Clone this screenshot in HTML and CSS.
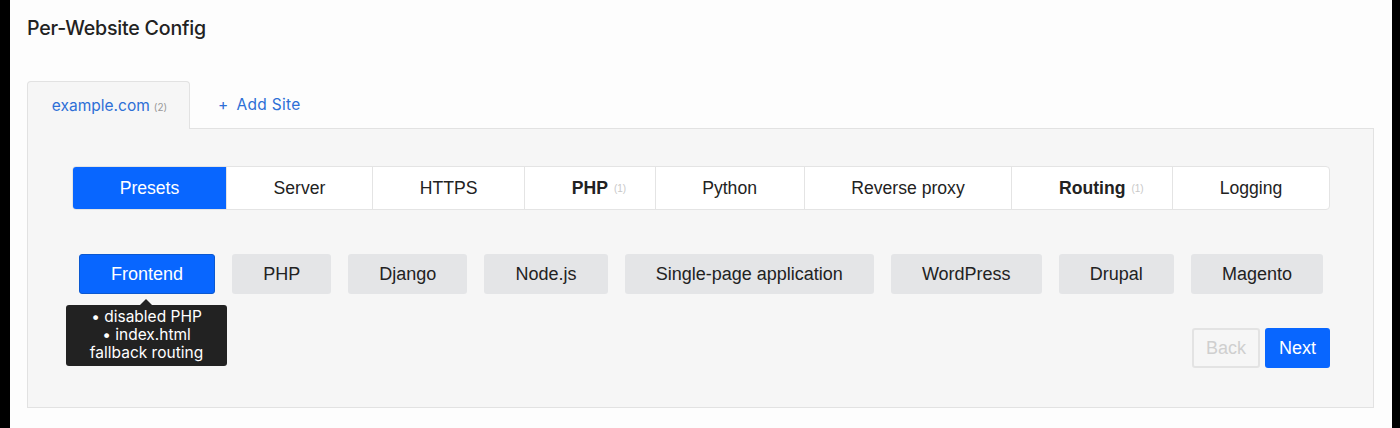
FILE: index.html
```html
<!DOCTYPE html>
<html>
<head>
<meta charset="utf-8">
<link rel="stylesheet" href="styles.css">
</head>
<body>
<div class="page">
  <h1 class="title">Per-Website Config</h1>
  <div class="site-tabs">
    <div class="site-tab active">example.com <span class="count">(2)</span></div>
    <div class="site-tab add"><span class="plus">+</span>Add Site</div>
    <div class="site-tabs-fill"></div>
  </div>
  <div class="panel">
    <div class="steps">
      <div class="step active">Presets</div>
      <div class="step">Server</div>
      <div class="step">HTTPS</div>
      <div class="step"><b class="has-badge">PHP<span class="badge">(1)</span></b></div>
      <div class="step">Python</div>
      <div class="step">Reverse proxy</div>
      <div class="step"><b class="has-badge">Routing<span class="badge">(1)</span></b></div>
      <div class="step">Logging</div>
    </div>
    <div class="presets">
      <div class="preset-wrap">
        <div class="preset active">Frontend</div>
        <div class="tooltip">• disabled PHP<br>• index.html<br>fallback routing</div>
      </div>
      <div class="preset">PHP</div>
      <div class="preset">Django</div>
      <div class="preset">Node.js</div>
      <div class="preset">Single-page application</div>
      <div class="preset">WordPress</div>
      <div class="preset">Drupal</div>
      <div class="preset">Magento</div>
    </div>
    <div class="nav">
      <div class="btn back">Back</div>
      <div class="btn next">Next</div>
    </div>
  </div>
</div>
</body>
</html>
```

FILE: styles.css
```css
html, body {
  margin: 0;
  padding: 0;
  background: #000;
  height: 428px;
  overflow: hidden;
}
.page {
  margin: 0 8px 0 10px;
  height: 428px;
  background: #fdfdfd;
  padding: 16px 18px 0 17px;
  box-sizing: border-box;
  font-family: "Liberation Sans", Arial, sans-serif;
  color: #222;
}
.title {
  margin: 0;
  font-family: Inter, "Noto Sans", sans-serif;
  font-size: 19.6px;
  line-height: 24px;
  font-weight: 500;
  color: #222;
  letter-spacing: -0.2px;
}
.site-tabs {
  display: flex;
  margin-top: 41px;
  height: 48px;
}
.site-tab {
  font-family: Inter, "Noto Sans", sans-serif;
  font-size: 15.5px;
  color: #2d6fd6;
  display: flex;
  align-items: center;
  box-sizing: border-box;
  padding-bottom: 1px;
}
.site-tab.active {
  width: 163px;
  justify-content: center;
  background: #f6f6f6;
  border: 1px solid #e2e2e2;
  border-bottom: none;
  border-radius: 4px 4px 0 0;
  padding-left: 2px;
}
.site-tab.add {
  padding-left: 28px;
  padding-right: 20px;
  border-bottom: 1px solid #e2e2e2;
  letter-spacing: 0.3px;
}
.plus {
  margin-right: 8px;
}
.site-tabs-fill {
  flex: 1;
  border-bottom: 1px solid #e2e2e2;
}
.count {
  font-size: 10px;
  color: #999;
  margin-left: 4px;
  margin-top: 3px;
}
.panel {
  background: #f6f6f6;
  border: 1px solid #e2e2e2;
  border-top: none;
  height: 279px;
  box-sizing: border-box;
  padding: 37px 43px 0 44px;
}
.steps {
  display: flex;
  height: 44px;
  background: #fff;
  border: 1px solid #e4e4e4;
  border-radius: 4px;
  box-sizing: border-box;
  overflow: hidden;
}
.step {
  flex: 1 1 auto;
  display: flex;
  align-items: center;
  justify-content: center;
  font-size: 17.6px;
  color: #222;
  border-left: 1px solid #e4e4e4;
  padding: 0 44px;
  white-space: nowrap;
}
.step:first-child { border-left: none; }
.has-badge {
  position: relative;
  font-weight: 700;
}
.badge {
  position: absolute;
  left: 100%;
  top: 5px;
  margin-left: 6px;
  font-size: 10px;
  font-weight: 400;
  color: #c8c8c8;
}
.step.active {
  background: #0866ff;
  color: #fff;
}
.presets {
  display: flex;
  justify-content: space-between;
  margin-top: 44px;
  padding: 0 7px 0 7px;
}
.preset-wrap {
  position: relative;
  display: flex;
}
.preset {
  height: 40px;
  display: flex;
  align-items: center;
  padding: 0 31px;
  background: #e4e5e7;
  border-radius: 3px;
  font-size: 18px;
  color: #222;
  box-sizing: border-box;
  white-space: nowrap;
}
.preset.active {
  background: #0866ff;
  border: 1px solid #0b58d0;
  color: #fff;
}
.tooltip {
  position: absolute;
  top: 51px;
  left: -13px;
  width: 161px;
  box-sizing: border-box;
  background: #222;
  color: #fff;
  border-radius: 3px;
  text-align: center;
  font-family: Inter, "Noto Sans", sans-serif;
  font-size: 15.5px;
  line-height: 18px;
  padding: 3px 2px 4px;
}
.tooltip::before {
  content: "";
  position: absolute;
  top: -6px;
  left: 74px;
  border-left: 6px solid transparent;
  border-right: 6px solid transparent;
  border-bottom: 6px solid #222;
}
.nav {
  display: flex;
  justify-content: flex-end;
  gap: 5px;
  margin-top: 34px;
}
.btn {
  height: 40px;
  display: flex;
  align-items: center;
  justify-content: center;
  font-size: 18px;
  border-radius: 3px;
  box-sizing: border-box;
}
.btn.back {
  width: 68px;
  border: 2px solid #e3e3e3;
  color: #cfcfcf;
}
.btn.next {
  width: 65px;
  background: #0866ff;
  color: #fff;
}
```
